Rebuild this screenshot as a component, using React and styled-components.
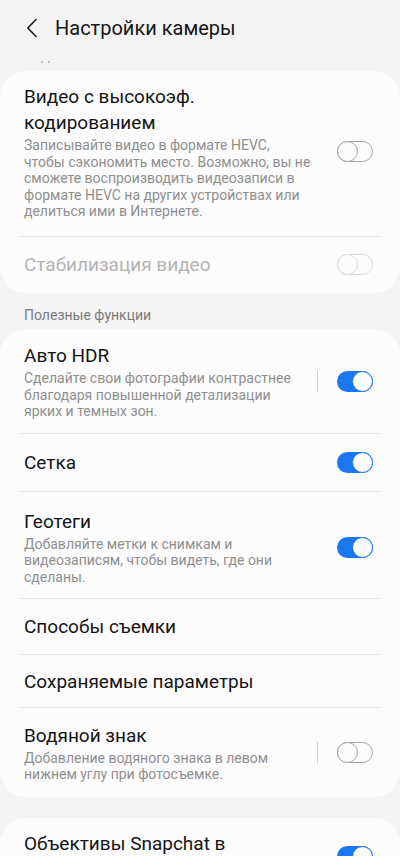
import React from 'react';
import styled, { createGlobalStyle, css } from 'styled-components';

const GlobalStyle = createGlobalStyle`
  html, body {
    margin: 0;
    padding: 0;
    background: #f4f4f4;
    overflow: hidden;
  }
  body {
    font-family: Roboto, 'Noto Sans', sans-serif;
    -webkit-font-smoothing: antialiased;
  }
`;

const Screen = styled.div`
  width: 400px;
  min-height: 856px;
  background: #f4f4f4;
`;

const Header = styled.div`
  display: flex;
  align-items: center;
  height: 56px;
  padding-left: 26px;
  gap: 17px;
`;

const Title = styled.div`
  font-size: 20px;
  color: #151515;
`;

const Dots = styled.div`
  display: flex;
  gap: 5px;
  height: 15px;
  padding-left: 41px;
  padding-top: 5px;
  box-sizing: border-box;
  span {
    width: 2px;
    height: 2px;
    border-radius: 50%;
    background: #b9b9b9;
  }
`;

const Card = styled.div`
  background: #fcfcfc;
  border-radius: 26px;
  margin-bottom: ${({ gap }) => gap || 0}px;
`;

const SectionLabel = styled.div`
  font-size: 14px;
  line-height: 18px;
  color: #7b7b7b;
  padding: 13px 24px 5px;
`;

const Row = styled.div`
  display: flex;
  align-items: center;
  padding: ${({ pad }) => pad || '15px 27px 15px 24px'};
  min-height: 25px;
`;

const TextCol = styled.div`
  flex: 1;
  max-width: 287px;
`;

const ItemTitle = styled.div`
  font-size: 19px;
  line-height: 26px;
  color: ${({ disabled }) => (disabled ? '#b4b4b4' : '#141414')};
`;

const Desc = styled.div`
  font-size: 14px;
  line-height: 16.6px;
  color: #8f8f8f;
  margin-top: 1px;
`;

const Side = styled.div`
  margin-left: auto;
  display: flex;
  align-items: center;
`;

const VBar = styled.div`
  width: 1px;
  height: 22px;
  background: #d4d4d4;
  margin-right: 19px;
`;

const Sep = styled.div`
  height: 1px;
  margin: 0 20px;
  background: #e6e6e6;
`;

const Track = styled.div`
  position: relative;
  width: 36px;
  height: 21px;
  box-sizing: border-box;
  border-radius: 11px;
  ${({ on, disabled }) =>
    on
      ? css`
          background: #1a77f0;
        `
      : css`
          border: 1.5px solid ${disabled ? '#dadada' : '#a3a3a3'};
          background: transparent;
        `}
`;

const Knob = styled.div`
  position: absolute;
  top: ${({ on }) => (on ? 0 : -1.5)}px;
  ${({ on }) => (on ? 'right: 0;' : 'left: -1.5px;')}
  width: 21px;
  height: 21px;
  box-sizing: border-box;
  border-radius: 50%;
  background: #fcfcfc;
  border: 1.5px solid
    ${({ on, disabled }) => (on ? '#1a77f0' : disabled ? '#dadada' : '#a3a3a3')};
`;

const Switch = ({ on, disabled }) => (
  <Track on={on} disabled={disabled}>
    <Knob on={on} disabled={disabled} />
  </Track>
);

const BackIcon = () => (
  <svg width="12" height="20" viewBox="0 0 12 20">
    <polyline
      points="10,1.5 1.8,10 10,18.5"
      fill="none"
      stroke="#222"
      strokeWidth="1.7"
      strokeLinecap="round"
      strokeLinejoin="round"
    />
  </svg>
);

const Item = ({ title, desc, on, disabled, bar, pad, toggle = true }) => (
  <Row pad={pad}>
    <TextCol>
      <ItemTitle disabled={disabled}>{title}</ItemTitle>
      {desc && <Desc>{desc}</Desc>}
    </TextCol>
    {toggle && (
      <Side>
        {bar && <VBar />}
        <Switch on={on} disabled={disabled} />
      </Side>
    )}
  </Row>
);

const App = () => (
  <>
    <GlobalStyle />
    <Screen>
      <Header>
        <BackIcon />
        <Title>Настройки камеры</Title>
      </Header>
      <Dots>
        <span />
        <span />
      </Dots>

      <Card>
        <Item
          title={<>Видео с высокоэф.<br />кодированием</>}
          desc="Записывайте видео в формате HEVC, чтобы сэкономить место. Возможно, вы не сможете воспроизводить видеозаписи в формате HEVC на других устройствах или делиться ими в Интернете."
          pad="13px 27px 16px 24px"
        />
        <Sep />
        <Item title="Стабилизация видео" disabled />
      </Card>

      <SectionLabel>Полезные функции</SectionLabel>

      <Card gap={21}>
        <Item
          title="Авто HDR"
          desc="Сделайте свои фотографии контрастнее благодаря повышенной детализации ярких и темных зон."
          on
          bar
          pad="14px 27px 13px 24px"
        />
        <Sep />
        <Item title="Сетка" on pad="16px 27px 15px 24px" />
        <Sep />
        <Item
          title="Геотеги"
          desc="Добавляйте метки к снимкам и видеозаписям, чтобы видеть, где они сделаны."
          on
          pad="17px 27px 12px 24px"
        />
        <Sep />
        <Item title="Способы съемки" toggle={false} pad="15px 27px 14px 24px" />
        <Sep />
        <Item title="Сохраняемые параметры" toggle={false} pad="14px 27px 12px 24px" />
        <Sep />
        <Item
          title="Водяной знак"
          desc="Добавление водяного знака в левом нижнем углу при фотосъемке."
          bar
          pad="15px 27px 14px 24px"
        />
      </Card>

      <Card>
        <Item
          title={<>Объективы Snapchat в<br />режиме камеры</>}
          on
          pad="13px 27px 15px 24px"
        />
      </Card>
    </Screen>
  </>
);

export default App;
